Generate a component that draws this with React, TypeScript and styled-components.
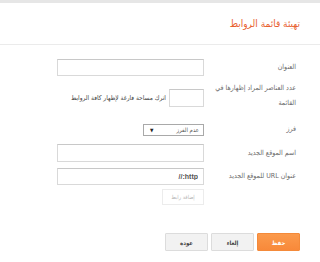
import styled, { createGlobalStyle } from 'styled-components';

const GlobalStyle = createGlobalStyle`
  html, body {
    margin: 0;
    padding: 0;
    background: #fff;
  }
  body {
    font-family: "DejaVu Sans Condensed", "DejaVu Sans", sans-serif;
    direction: rtl;
  }
`;

const Page = styled.div`
  width: 320px;
  height: 262px;
  border-top: 3px solid #e6e6e6;
  box-sizing: border-box;
  overflow: hidden;
`;

const Header = styled.div`
  height: 41px;
  border-bottom: 1px solid #ebebeb;
  display: flex;
  align-items: center;
  padding: 0 20px;
`;

const Title = styled.h3`
  margin: 0;
  font-size: 10px;
  font-weight: normal;
  color: #e8602f;
`;

const Form = styled.div`
  padding: 14px 24px 0 0;
`;

const Row = styled.div<{ $top?: number; $align?: string }>`
  display: grid;
  grid-template-columns: 86px auto;
  column-gap: 6px;
  align-items: ${(p) => p.$align || 'center'};
  margin-top: ${(p) => p.$top || 0}px;
`;

const Label = styled.div<{ $wrap?: boolean }>`
  font-size: 7px;
  line-height: 15px;
  color: #6a6a6a;
  white-space: ${(p) => (p.$wrap ? 'normal' : 'nowrap')};
`;

const Field = styled.div<{ $top?: number }>`
  display: flex;
  align-items: center;
  gap: 3px;
  margin-top: ${(p) => p.$top || 0}px;
`;

const TextInput = styled.input<{ $w?: number; $h?: number }>`
  box-sizing: border-box;
  width: ${(p) => p.$w || 147}px;
  height: ${(p) => p.$h || 17}px;
  border: 1px solid #d9d9d9;
  border-top-color: #c8c8c8;
  padding: 0 5px;
  font-family: Arial, "Liberation Sans", sans-serif;
  font-size: 7px;
  font-weight: bold;
  color: #555;
  direction: rtl;
  outline: none;
`;

const Hint = styled.span`
  font-size: 6.5px;
  color: #444;
  white-space: nowrap;
`;

const Select = styled.div`
  box-sizing: border-box;
  width: 61px;
  height: 12px;
  border: 1px solid #a9a9a9;
  display: flex;
  align-items: center;
  justify-content: space-between;
  padding: 0 4px 0 6px;
  font-size: 6px;
  color: #555;
`;

const Arrow = styled.span`
  font-size: 5px;
  color: #222;
`;

const AddButton = styled.button`
  box-sizing: border-box;
  width: 42px;
  height: 16px;
  border: 1px solid #ececec;
  background: #fff;
  color: #b8b8b8;
  font-family: "DejaVu Sans Condensed", "DejaVu Sans", sans-serif;
  font-size: 5.5px;
  padding: 0;
`;

const Footer = styled.div`
  display: flex;
  gap: 3px;
  padding: 28px 20px 0 0;
`;

const Button = styled.button<{ $primary?: boolean }>`
  box-sizing: border-box;
  width: 43px;
  height: 18px;
  padding: 0;
  font-family: "DejaVu Sans Condensed", "DejaVu Sans", sans-serif;
  font-size: 6px;
  font-weight: bold;
  border: 1px solid ${(p) => (p.$primary ? '#f48a3a' : '#dcdcdc')};
  background: ${(p) => (p.$primary ? 'linear-gradient(#fb9a4c, #f8893a)' : '#f2f2f2')};
  color: ${(p) => (p.$primary ? '#fff' : '#444')};
  border-radius: 1px;
`;

export default function App() {
  return (
    <>
      <GlobalStyle />
      <Page>
        <Header>
          <Title>تهيئة قائمة الروابط</Title>
        </Header>
        <Form>
          <Row>
            <Label>العنوان</Label>
            <Field>
              <TextInput />
            </Field>
          </Row>
          <Row $top={5} $align="start">
            <Label $wrap>عدد العناصر المراد إظهارها في القائمة</Label>
            <Field $top={8}>
              <TextInput $w={35} $h={18} />
              <Hint>اترك مساحة فارغة لإظهار كافة الروابط</Hint>
            </Field>
          </Row>
          <Row $top={11}>
            <Label>فرز</Label>
            <Field>
              <Select>
                <span>عدم الفرز</span>
                <Arrow>▼</Arrow>
              </Select>
            </Field>
          </Row>
          <Row $top={7}>
            <Label>اسم الموقع الجديد</Label>
            <Field>
              <TextInput $h={18} />
            </Field>
          </Row>
          <Row $top={6}>
            <Label>عنوان URL للموقع الجديد</Label>
            <Field>
              <TextInput defaultValue="http://" />
            </Field>
          </Row>
          <Row $top={4}>
            <span />
            <Field>
              <AddButton disabled>إضافة رابط</AddButton>
            </Field>
          </Row>
        </Form>
        <Footer>
          <Button $primary>حفظ</Button>
          <Button>إلغاء</Button>
          <Button>عودة</Button>
        </Footer>
      </Page>
    </>
  );
}
